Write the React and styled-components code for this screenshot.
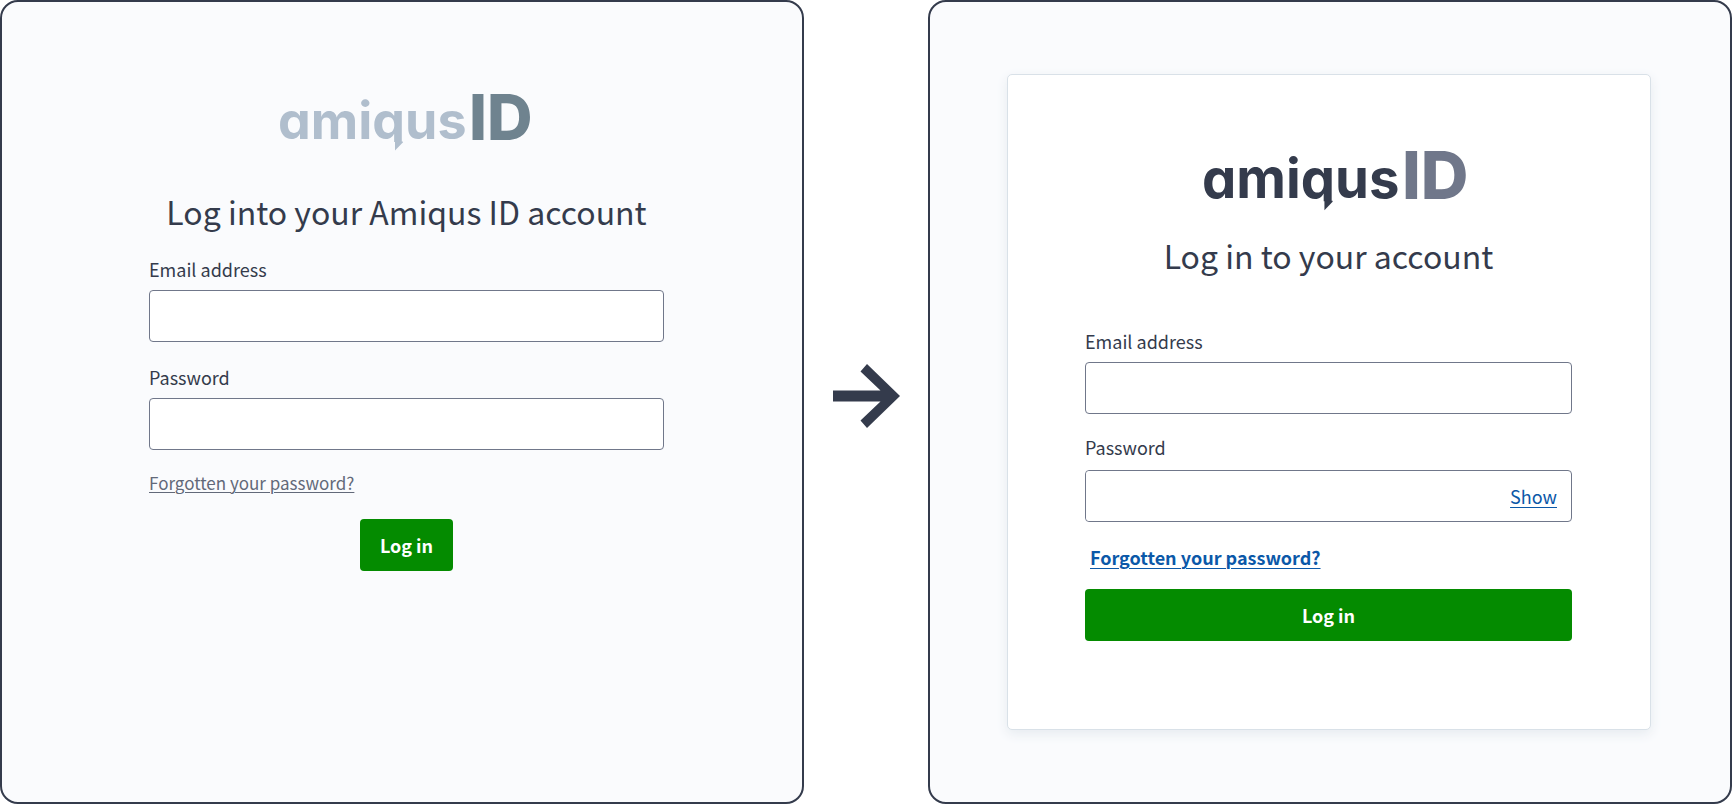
import React, { useId, useState } from "react";
import styled, { createGlobalStyle } from "styled-components";

const Logo = ({ wordColor, idColor, width, indent = 0 }) => {
  const clipId = useId();

  return (
    <LogoImage viewBox="0 0 252 58" $width={width} $indent={indent} role="img" aria-label="amiqus ID">
      <clipPath id={clipId}>
        <path d="M-5 -5H257V49H-5Z" />
      </clipPath>
      <LogoWord x="-3" y="46" fill={wordColor} clipPath={`url(#${clipId})`}>
        amiqus
      </LogoWord>
      {/* speech bubble tail under the q */}
      <path d="M114 48.500H121.800V49.500L114 57.500Z" fill={wordColor} />
      <LogoId x="188" y="47" fill={idColor}>
        ID
      </LogoId>
    </LogoImage>
  );
};

const OldLogin = () => (
  <OldForm onSubmit={(e) => e.preventDefault()}>
    <Logo wordColor="#b0becd" idColor="#6f838f" width={252} />
    <Title $top={40} $bottom={25}>
      Log into your Amiqus ID account
    </Title>
    <Field $bottom={22}>
      <Label htmlFor="old-email">Email address</Label>
      <Input id="old-email" type="email" />
    </Field>
    <Field $bottom={20}>
      <Label htmlFor="old-password">Password</Label>
      <Input id="old-password" type="password" />
    </Field>
    <ForgottenLink href="#forgotten">Forgotten your password?</ForgottenLink>
    <LoginButton type="submit">Log in</LoginButton>
  </OldForm>
);

const NewLogin = () => {
  const [visible, setVisible] = useState(false);

  return (
    <Card onSubmit={(e) => e.preventDefault()}>
      <Logo wordColor="#343b4c" idColor="#70778a" width={264} indent={16} />
      <Title $top={24} $bottom={53}>
        Log in to your account
      </Title>
      <Field $bottom={20}>
        <Label htmlFor="new-email">Email address</Label>
        <Input id="new-email" type="email" />
      </Field>
      <Field $bottom={22}>
        <Label htmlFor="new-password" $gap={10}>
          Password
        </Label>
        <PasswordBox>
          <PasswordInput id="new-password" type={visible ? "text" : "password"} />
          <ShowButton type="button" onClick={() => setVisible(!visible)}>
            {visible ? "Hide" : "Show"}
          </ShowButton>
        </PasswordBox>
      </Field>
      <BoldLink href="#forgotten">Forgotten your password?</BoldLink>
      <WideButton type="submit">Log in</WideButton>
    </Card>
  );
};

const App = () => {
  return (
    <>
      <GlobalStyle />
      <Comparison>
        <Panel $padding="91px 138px 90px 147px">
          <OldLogin />
        </Panel>
        <Arrow viewBox="0 0 67 64" aria-hidden="true">
          <path d="M0 26.500H47.500L27.500 7.500L34 0L67 32L34 64L27.500 56.500L47.500 37.500H0Z" />
        </Arrow>
        <Panel $padding="72px 79px 72px 77px">
          <NewLogin />
        </Panel>
      </Comparison>
    </>
  );
};

const GlobalStyle = createGlobalStyle`
  * {
    box-sizing: border-box;
  }
  body {
    margin: 0;
    background-color: white;
    color: #343b4c;
    font-family: "Noto Sans CJK SC", "Noto Sans", sans-serif;
    font-size: 18px;
    line-height: 26px;
  }
  input, button {
    font: inherit;
  }
`;
const Comparison = styled.main`
  display: grid;
  grid-template-columns: 1fr 124px 1fr;
  min-height: 100vh;
`;
const Panel = styled.section`
  padding: ${(props) => props.$padding};
  border: 2px solid #343b4c;
  border-radius: 18px;
  background-color: #fafbfd;
`;
const Arrow = styled.svg`
  width: 67px;
  align-self: center;
  justify-self: center;
  margin-bottom: 12px;
  fill: #343b4c;
`;
const OldForm = styled.form`
  display: flex;
  flex-direction: column;
`;
const Card = styled.form`
  display: flex;
  flex-direction: column;
  padding: 75px 78px 88px 77px;
  border: 1px solid #d9e1e8;
  border-radius: 5px;
  background-color: white;
  box-shadow: 0 4px 12px #e6ebf0;
`;
const LogoImage = styled.svg`
  width: ${(props) => props.$width}px;
  margin-left: ${(props) => props.$indent}px;
  align-self: center;
  overflow: visible;
`;
const LogoWord = styled.text`
  font-family: Inter, sans-serif;
  font-size: 52px;
  font-weight: 700;
  font-feature-settings: "cv11";
`;
const LogoId = styled.text`
  font-family: Inter, sans-serif;
  font-size: 63px;
  font-weight: 800;
`;
const Title = styled.h1`
  margin: ${(props) => props.$top}px 0 ${(props) => props.$bottom}px;
  font-size: 32px;
  font-weight: 400;
  line-height: 40px;
  text-align: center;
`;
const Field = styled.div`
  display: flex;
  flex-direction: column;
  margin-bottom: ${(props) => props.$bottom}px;
`;
const Label = styled.label`
  margin-bottom: ${(props) => props.$gap || 8}px;
`;
const Input = styled.input`
  width: 100%;
  height: 52px;
  padding: 0 14px;
  border: 1px solid #70778a;
  border-radius: 4px;
  background-color: white;
  color: inherit;
`;
const PasswordBox = styled.div`
  display: flex;
  align-items: center;
  height: 52px;
  padding-right: 14px;
  border: 1px solid #70778a;
  border-radius: 4px;
  background-color: white;
`;
const PasswordInput = styled(Input)`
  flex: 1;
  height: 100%;
  border: none;
`;
const ShowButton = styled.button`
  padding: 0;
  border: none;
  background: none;
  color: #0b58a8;
  text-decoration: underline;
  text-decoration-thickness: 1px;
  text-underline-offset: 3px;
  cursor: pointer;
`;
const ForgottenLink = styled.a`
  align-self: flex-start;
  color: #626979;
  font-size: 17px;
  text-decoration-thickness: 1px;
  text-underline-offset: 2px;
`;
const BoldLink = styled(ForgottenLink)`
  margin-left: 5px;
  color: #0b58a8;
  font-size: 18px;
  font-weight: 700;
  text-underline-offset: 3px;
`;
const LoginButton = styled.button`
  align-self: center;
  height: 52px;
  margin-top: 23px;
  padding: 0 20px;
  border: none;
  border-radius: 4px;
  background-color: #048b00;
  color: white;
  font-weight: 700;
  cursor: pointer;
`;
const WideButton = styled(LoginButton)`
  align-self: stretch;
  margin-top: 19px;
`;

export default App;
